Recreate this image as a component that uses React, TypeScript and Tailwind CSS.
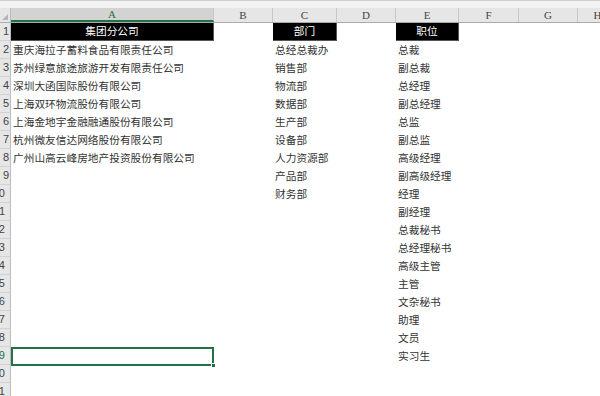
const cols = [
  { key: "A", w: "w-[203px]" },
  { key: "B", w: "w-[59px]" },
  { key: "C", w: "w-[64px]" },
  { key: "D", w: "w-[59px]" },
  { key: "E", w: "w-[63px]" },
  { key: "F", w: "w-[60px]" },
  { key: "G", w: "w-[59px]" },
  { key: "H", w: "w-[40px]" },
];

const companies = [
  "重庆海拉子蓄料食品有限责任公司",
  "苏州绿意旅途旅游开发有限责任公司",
  "深圳大函国际股份有限公司",
  "上海双环物流股份有限公司",
  "上海金地宇金融融通股份有限公司",
  "杭州微友信达网络股份有限公司",
  "广州山高云峰房地产投资股份有限公司",
];

const depts = ["总经总裁办", "销售部", "物流部", "数据部", "生产部", "设备部", "人力资源部", "产品部", "财务部"];

const titles = [
  "总裁", "副总裁", "总经理", "副总经理", "总监", "副总监", "高级经理", "副高级经理", "经理",
  "副经理", "总裁秘书", "总经理秘书", "高级主管", "主管", "文杂秘书", "助理", "文员", "实习生",
];

const cjk = "font-['Microsoft_YaHei','Noto_Sans_CJK_SC',sans-serif]";

function RowHeader({ n }: { n: number }) {
  const active = n === 19;
  return (
    <div className="w-[11px] h-[18px] shrink-0 overflow-hidden bg-[#e6e6e6] border-r border-b border-r-[#bdbdbd] border-b-[#d2d2d2]">
      <div
        className={`flex justify-end h-full items-center leading-none text-[11px] font-['Liberation_Sans',sans-serif] ${
          n > 9 ? "pr-[5px]" : "pr-[1px]"
        } ${active ? "text-[#217346]" : "text-[#444]"}`}
      >
        {n}
      </div>
    </div>
  );
}

function Row({ n }: { n: number }) {
  const a = n === 1 ? "集团分公司" : companies[n - 2];
  const c = n === 1 ? "部门" : depts[n - 2];
  const e = n === 1 ? "职位" : titles[n - 2];
  const head = n === 1;
  const cell = (text: string | undefined, w: string, black: boolean, extra = "") => (
    <div
      className={`${w} h-[18px] shrink-0 flex items-center whitespace-nowrap overflow-visible text-[10.7px] leading-none ${
        black ? "bg-black text-white justify-center border-r border-b border-[#555]" : "text-[#333] pl-[2px]"
      } ${extra}`}
    >
      {text}
    </div>
  );
  return (
    <div className={`flex ${cjk}`}>
      <RowHeader n={n} />
      <div className="relative flex">
        {cell(a, "w-[203px]", head)}
        {cell(undefined, "w-[59px]", false)}
        {cell(c, "w-[64px]", head)}
        {cell(undefined, "w-[59px]", false)}
        {cell(e, "w-[63px]", head)}
        {cell(undefined, "w-[60px]", false)}
        {cell(undefined, "w-[59px]", false)}
        {cell(undefined, "w-[40px]", false)}
        {n === 19 && (
          <div className="absolute left-0 top-0 w-[203px] h-[19px] border-2 border-[#217346] pointer-events-none">
            <div className="absolute -right-[4px] -bottom-[4px] w-[5px] h-[5px] bg-[#217346] border border-white" />
          </div>
        )}
      </div>
    </div>
  );
}

export default function App() {
  const rows = Array.from({ length: 21 }, (_, i) => i + 1);
  return (
    <div className="w-[600px] h-[396px] overflow-hidden bg-white">
      <div className="h-[8px] bg-[#f3f3f3] border-t border-[#cfcfcf]" />
      <div className="flex h-[15px] bg-[#e6e6e6] border-b border-[#ababab]">
        <div className="relative w-[11px] shrink-0 border-r border-[#bdbdbd]">
          <div className="absolute right-[2px] bottom-[2px] w-0 h-0 border-l-[6px] border-l-transparent border-b-[6px] border-b-[#b5b5b5]" />
        </div>
        {cols.map((c) => (
          <div
            key={c.key}
            className={`${c.w} shrink-0 flex items-center justify-center text-[11px] leading-none font-['Liberation_Serif',serif] border-r border-[#c8c8c8] ${
              c.key === "A" ? "bg-[#d3d3d3] text-[#217346] border-b-2 border-b-[#217346]" : "text-[#444]"
            }`}
          >
            {c.key}
          </div>
        ))}
      </div>
      {rows.map((n) => (
        <Row key={n} n={n} />
      ))}
    </div>
  );
}
